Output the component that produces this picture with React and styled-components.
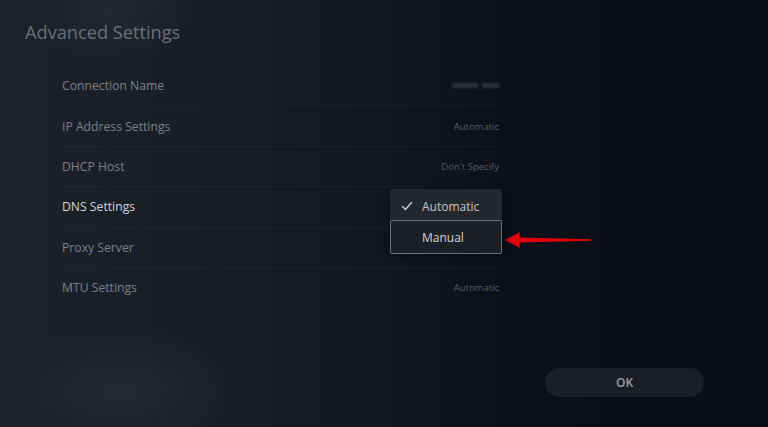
import React from "react";
import styled, { createGlobalStyle } from "styled-components";

const Global = createGlobalStyle`
  html, body { margin: 0; padding: 0; background: #0a0e17; }
  body { font-family: "Open Sans", "Noto Sans", sans-serif; }
  * { box-sizing: border-box; }
`;

const Screen = styled.div`
  position: relative;
  width: 768px;
  height: 427px;
  overflow: hidden;
  display: flex;
  flex-direction: column;
  background:
    radial-gradient(ellipse 180px 90px at 120px 390px, rgba(44, 50, 60, 0.55), transparent 70%),
    radial-gradient(ellipse 120px 70px at 110px 10px, rgba(44, 50, 60, 0.5), transparent 70%),
    linear-gradient(90deg, #1b2029 0%, #191d26 25%, #12161f 50%, #0b0f18 68%, #0a0e17 100%);
`;

const Title = styled.h1`
  margin: 0;
  padding: 20px 0 0 25px;
  height: 66px;
  font-size: 18.2px;
  font-weight: 400;
  color: #6b7079;
`;

const List = styled.div`
  position: relative;
  margin-left: 62px;
  width: 437px;
  display: flex;
  flex-direction: column;
`;

const Row = styled.div`
  height: 40.4px;
  display: flex;
  align-items: center;
  justify-content: space-between;
  border-bottom: 1px solid ${(p) => (p.$last ? "transparent" : "rgba(120, 128, 140, 0.08)")};
`;

const Label = styled.span`
  font-size: 12.2px;
  color: ${(p) => (p.$active ? "#d3d6db" : "#7d828a")};
`;

const Value = styled.span`
  font-size: 9.5px;
  color: #595e66;
`;

const Blurred = styled.span`
  display: flex;
  gap: 4px;
  align-items: center;
`;

const BlurBlock = styled.span`
  display: block;
  width: ${(p) => p.$w}px;
  height: 5px;
  background: #2a3039;
  filter: blur(0.8px);
`;

const Menu = styled.div`
  position: absolute;
  left: 328px;
  top: 123px;
  width: 112px;
  background: #23272e;
  border-radius: 2px;
  display: flex;
  flex-direction: column;
  box-shadow: 0 2px 8px rgba(0, 0, 0, 0.4);
`;

const MenuItem = styled.div`
  height: ${(p) => (p.$focused ? 34 : 31)}px;
  display: flex;
  align-items: center;
  padding-left: ${(p) => (p.$focused ? 31 : 11)}px;
  padding-top: ${(p) => (p.$focused ? 0 : 3)}px;
  gap: 9px;
  font-size: 12px;
  color: ${(p) => (p.$focused ? "#d4d7db" : "#c3c6cb")};
  background: ${(p) => (p.$focused ? "#1b1f26" : "transparent")};
  border: ${(p) => (p.$focused ? "1.5px solid #6a6e75" : "none")};
  border-radius: 2px;
`;

const Check = styled.svg`
  width: 12px;
  height: 12px;
  flex: none;
`;

const Arrow = styled.svg`
  position: absolute;
  left: 503px;
  top: 229px;
  width: 90px;
  height: 22px;
`;

const Footer = styled.div`
  margin-top: auto;
  display: flex;
  justify-content: flex-end;
  padding: 0 64px 30px 0;
`;

const OkButton = styled.button`
  width: 159px;
  height: 29px;
  border: none;
  border-radius: 15px;
  background: #1a1e25;
  color: #9a9ea4;
  font-family: inherit;
  font-size: 12px;
  font-weight: 600;
`;

const rows = [
  { label: "Connection Name", blurred: true },
  { label: "IP Address Settings", value: "Automatic" },
  { label: "DHCP Host", value: "Don't Specify" },
  { label: "DNS Settings", active: true },
  { label: "Proxy Server" },
  { label: "MTU Settings", value: "Automatic" },
];

export default function App() {
  return (
    <Screen>
      <Global />
      <Title>Advanced Settings</Title>
      <List>
        {rows.map((r, i) => (
          <Row key={r.label} $last={i === rows.length - 1}>
            <Label $active={r.active}>{r.label}</Label>
            {r.blurred ? (
              <Blurred>
                <BlurBlock $w={26} />
                <BlurBlock $w={17} />
              </Blurred>
            ) : r.value ? (
              <Value>{r.value}</Value>
            ) : null}
          </Row>
        ))}
        <Menu>
          <MenuItem>
            <Check viewBox="0 0 12 12">
              <path d="M1.5 6.5 L4.5 9.5 L10.5 2.5" fill="none" stroke="#c3c6cb" strokeWidth="1.5" strokeLinecap="round" strokeLinejoin="round" />
            </Check>
            Automatic
          </MenuItem>
          <MenuItem $focused>Manual</MenuItem>
        </Menu>
      </List>
      <Arrow viewBox="0 0 90 22">
        <polygon points="2,11 17,3 16,8.5 88,10.2 88,11.8 16,13.5 17,19" fill="#e4000b" />
      </Arrow>
      <Footer>
        <OkButton>OK</OkButton>
      </Footer>
    </Screen>
  );
}
